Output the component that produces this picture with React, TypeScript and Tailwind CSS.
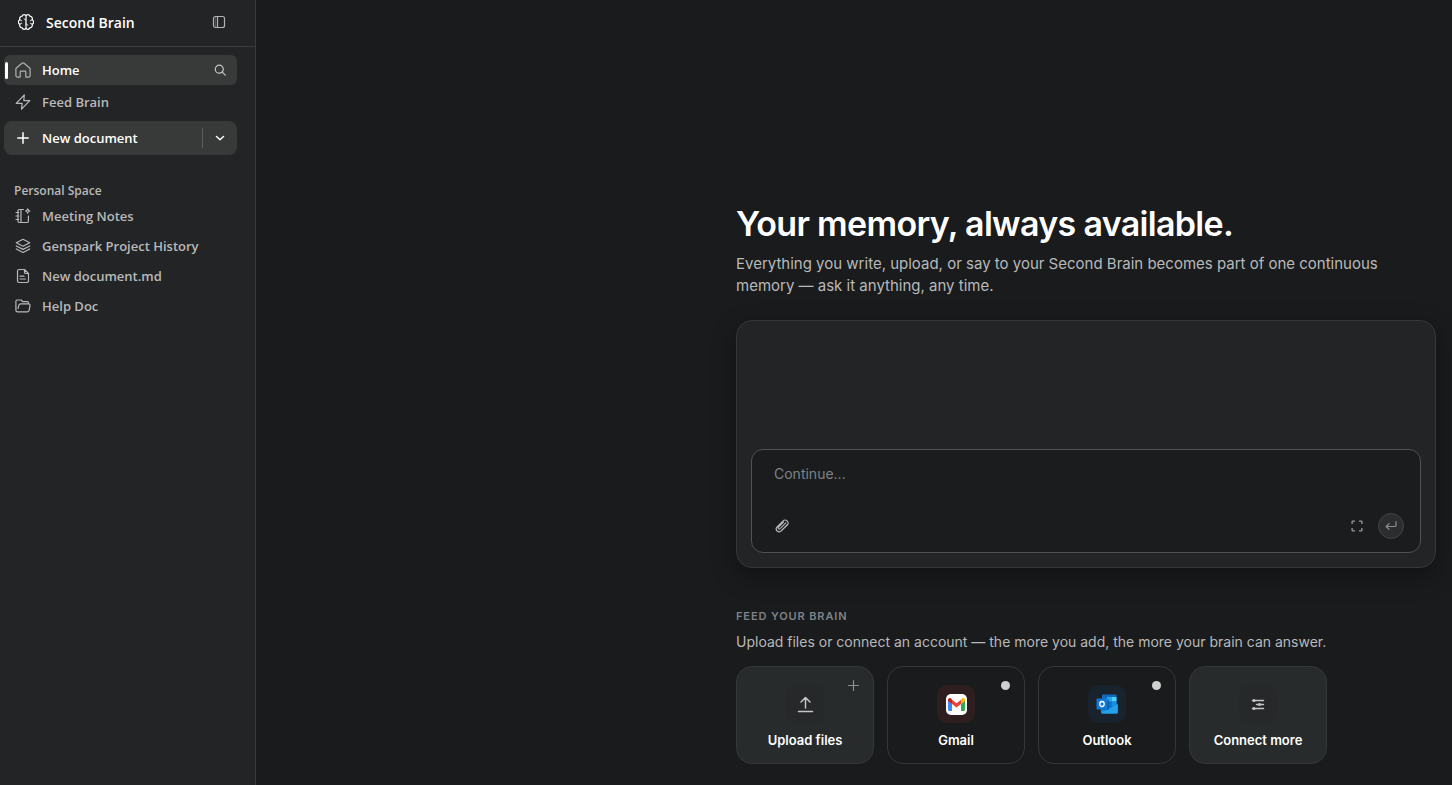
import React from "react";
import type { ReactNode } from "react";

type IconProps = { className?: string; children: ReactNode; box?: string; width?: number };

function Icon({ className = "size-4", children, box = "0 0 16 16", width = 1.2 }: IconProps) {
  return (
    <svg
      className={className}
      viewBox={box}
      fill="none"
      stroke="currentColor"
      strokeWidth={width}
      strokeLinecap="round"
      strokeLinejoin="round"
      aria-hidden="true"
    >
      {children}
    </svg>
  );
}

const BrainIcon = () => (
  <Icon>
    <path d="M8 2v12M8 2.200C7.500.2 4.800.1 4.100 2.200 2.200 2.400 1.200 4.100 1.900 5.700-.1 6.700-.1 9.300 1.900 10.300c-.7 1.600.3 3.300 2.200 3.500.7 2.100 3.400 2 3.900 0M8 2.200c.5-2 3.200-2.100 3.900 0 1.900.2 2.900 1.900 2.200 3.500 2 1 2 3.600 0 4.600.7 1.600-.3 3.300-2.200 3.500-.7 2.100-3.400 2-3.900 0" />
    <path d="M1.900 5.700c.4.700 1 1 1.800 1M1.900 10.300c.4-.7 1-1 1.800-1M14.100 5.700c-.4.700-1 1-1.800 1M14.100 10.300c-.4-.7-1-1-1.800-1M8 6c-.900 0-1.500-.4-1.800-1.100M8 10c.900 0 1.500.4 1.800 1.100" strokeWidth="1" />
  </Icon>
);

const PanelIcon = () => (
  <Icon>
    <rect x="2.500" y="2.500" width="11" height="11" rx="2" />
    <path d="M6.500 2.500v11" />
    <path d="M4.500 3v10" strokeOpacity=".35" />
  </Icon>
);

const HomeIcon = () => (
  <Icon>
    <path d="M.9 7.100c0-.6.3-1.100.7-1.400L7 1.200c.6-.5 1.400-.5 2 0l5.400 4.500c.4.3.7.8.7 1.400v6.400c0 .9-.7 1.600-1.600 1.600h-2.700V10c0-.5-.3-.8-.8-.8H6c-.5 0-.8.3-.8.8v5.100H2.500c-.9 0-1.600-.7-1.600-1.600z" />
  </Icon>
);

const BoltIcon = () => (
  <Icon>
    <path d="M9.300.8 1.200 9.400h6L6.500 15.200l8.300-8.600h-6z" />
  </Icon>
);

const PlusIcon = () => (
  <Icon width={1.500}>
    <path d="M8 2.800v10.400M2.800 8h10.400" />
  </Icon>
);

const SearchIcon = () => (
  <Icon>
    <circle cx="7.300" cy="7.200" r="4" />
    <path d="m10.300 10.200 3 3" />
  </Icon>
);

const ChevronIcon = () => (
  <Icon width={1.500}>
    <path d="m4.500 6.500 3.500 3.200 3.500-3.200" />
  </Icon>
);

const NotesIcon = () => (
  <Icon>
    <path d="M8.500 1.500H4.200c-.7 0-1.200.5-1.200 1.200v10.600c0 .7.5 1.200 1.200 1.200h8c.7 0 1.200-.5 1.200-1.200V8M6 1.500v13M1 4.500h2.800M1 8h2.800M1 11.500h2.800" />
    <path d="M12.700.9c.3 1.300.8 1.800 2.100 2.100-1.300.3-1.800.8-2.100 2.100-.3-1.300-.8-1.800-2.100-2.100 1.300-.3 1.800-.8 2.100-2.100z" />
  </Icon>
);

const LayersIcon = () => (
  <Icon>
    <path d="M8 1.300 14.700 4.700 8 8.200 1.300 4.700zM1.300 8 8 11.400 14.700 8M1.300 11 8 14.500 14.700 11" />
  </Icon>
);

const DocIcon = () => (
  <Icon>
    <path d="M9.500 1.500H4c-.8 0-1.500.6-1.500 1.400v10.200c0 .8.700 1.400 1.500 1.400h8c.8 0 1.500-.6 1.500-1.400V5.500zM9.500 1.500v2.800c0 .7.500 1.200 1.200 1.200h2.800M5 8.200h4M5 11h5.500" />
  </Icon>
);

const FolderIcon = () => (
  <Icon>
    <path d="M13.600 5.800V5c0-.8-.6-1.400-1.400-1.400H7.600L6.200 2H2.300C1.500 2 .9 2.600.9 3.400v8.800c0 1 .7 1.700 1.700 1.700h9.800c.8 0 1.400-.5 1.600-1.200l1-4.900c.2-1-.5-2-1.600-2H5.600c-.8 0-1.500.5-1.700 1.300L3 10.500" />
  </Icon>
);

const ClipIcon = () => (
  <Icon width={1.100}>
    <path d="m9.500 4-5 5c-.5.500-.5 1.200-.1 1.600.500.500 1.200.500 1.700 0l5.700-5.700M14 6.300l-6.400 6.400c-1.300 1.300-3.300 1.400-4.500.3-1.200-1.200-1.100-3.100.2-4.400l5.300-5.300c1.300-1.300 3.100-1.600 4.400-.6.200.1.300.3.400.4 1 1.200.9 2.500.1 3.400L7.500 12.300" />
  </Icon>
);

const ExpandIcon = () => (
  <svg className="size-4" viewBox="0 0 16 16" fill="none" stroke="currentColor" strokeWidth="1.300" aria-hidden="true">
    <path d="M3.100 6V3.700c0-.4.2-.6.6-.6H6M10 3.100h2.300c.4 0 .6.2.6.6V6M12.900 10v2.300c0 .4-.2.6-.6.6H10M6 12.900H3.700c-.4 0-.6-.2-.6-.6V10" />
  </svg>
);

const ReturnIcon = () => (
  <Icon className="size-3.5" box="0 0 14 14">
    <path d="M12 2.500v3.700c0 .8-.5 1.300-1.300 1.300H2.500M5 4.700 2.200 7.500 5 10.300" />
  </Icon>
);

const UploadIcon = () => (
  <Icon className="size-5" box="0 0 20 20" width={1.500}>
    <path d="M10.500 14V3.700M6 8l4.500-4.500L15 8M3.500 17.500h14" />
  </Icon>
);

const SlidersIcon = () => (
  <Icon width={1.400}>
    <path d="M2.500 4.500h11M6.500 8.500h7M2.500 12.500h11" />
    <circle cx="4" cy="4.500" r=".8" fill="currentColor" />
    <circle cx="9.500" cy="8.500" r=".8" fill="currentColor" />
    <circle cx="4" cy="12.500" r=".8" fill="currentColor" />
  </Icon>
);

const GmailLogo = () => (
  <svg className="size-[21px]" viewBox="0 0 21 21" aria-hidden="true">
    <rect width="21" height="21" rx="5" fill="#fff" />
    <path d="M2 6.500v9.300c0 .7.500 1.200 1.200 1.200H6V9.500z" fill="#4285f4" />
    <path d="M19 6.500v9.300c0 .7-.5 1.200-1.200 1.200H15V9.500z" fill="#34a853" />
    <path d="M15 5.700v4.400l4-3V6c0-1.800-1.900-2.600-3.200-1.500z" fill="#fbbc04" />
    <path d="M6 10.100V5.700l4.500 3.500L15 5.700v4.400l-4.500 3.400z" fill="#ea4335" />
    <path d="M2 6v1.100l4 3V5.700L5.200 4.500C3.900 3.400 2 4.200 2 6z" fill="#c5221f" />
  </svg>
);

const OutlookLogo = () => (
  <svg className="size-[22px]" viewBox="0 0 22 22" aria-hidden="true">
    <path d="M6 2.500c0-.6.400-1 1-1h12.500c.6 0 1 .4 1 1V18H6z" fill="#0f6cbd" />
    <path d="M11 4h4.800v4.500H11z" fill="#28a8ea" />
    <path d="M15.800 4h4.700v4.500h-4.700z" fill="#50d0fa" />
    <path d="M11 8.500h4.800v5H11z" fill="#0078d4" />
    <path d="M15.800 8.500h4.700v5h-4.700z" fill="#1490df" />
    <path d="m12.500 16 9.200-5v8.200c0 .8-.6 1.300-1.300 1.300H6.200c-.7 0-1.300-.6-1.300-1.300V14z" fill="#1490df" />
    <path d="m21.700 11-8.200 4.600L5.300 20.100c.2.300.6.400.9.400h14.200c.7 0 1.300-.5 1.300-1.300z" fill="#22a2ea" />
    <path d="M5 6.500h7c.6 0 1 .4 1 1v8.500c0 .6-.4 1-1 1H5z" fill="#0a4f8f" opacity=".6" />
    <rect x=".5" y="5.500" width="11" height="11" rx="1" fill="#1078d6" />
    <ellipse cx="6" cy="11" rx="2.200" ry="2.500" fill="none" stroke="#fff" strokeWidth="1.300" />
  </svg>
);

const spaceItems = [
  { label: "Meeting Notes", icon: <NotesIcon /> },
  { label: "Genspark Project History", icon: <LayersIcon /> },
  { label: "New document.md", icon: <DocIcon /> },
  { label: "Help Doc", icon: <FolderIcon /> },
];

function Label({ children }: { children: ReactNode }) {
  return <span className="leading-5">{children}</span>;
}

function Sidebar() {
  return (
    <aside className="flex w-64 shrink-0 flex-col border-r border-[#3a3b3c] bg-[#232425] font-['Open_Sans','Noto_Sans',sans-serif] text-[13px] font-semibold text-[#b8b9ba]">
      <header className="flex h-[47px] items-center border-b border-[#3a3b3c] pr-7 pb-0.5 pl-[18px] text-sm text-white">
        <BrainIcon />
        <div className="ml-3 flex flex-1 pt-0.5">
          <Label>Second Brain</Label>
        </div>
        <button type="button" aria-label="Toggle sidebar" className="text-[#b0b1b2]">
          <PanelIcon />
        </button>
      </header>

      <nav aria-label="Main" className="mt-2 flex flex-col gap-0.5 pr-[18px] pl-1">
        <div className="relative flex h-[30px] items-center rounded-md bg-[#383939]">
          <span className="absolute left-px h-[17px] w-[3px] rounded-sm bg-white" />
          <a href="#home" className="flex flex-1 items-center gap-[11px] pl-[11px] text-white">
            <span className="text-[#b0b1b2]">
              <HomeIcon />
            </span>
            <Label>Home</Label>
          </a>
          <button type="button" aria-label="Search" className="mr-[9px] text-[#c4c5c6]">
            <SearchIcon />
          </button>
        </div>
        <a href="#feed" className="flex h-[30px] items-center gap-[11px] pl-[11px]">
          <BoltIcon />
          <Label>Feed Brain</Label>
        </a>
      </nav>

      <div className="mt-1 mr-[18px] ml-1 flex h-[34px] items-center rounded-lg bg-[#383939] text-white">
        <button type="button" className="flex h-full flex-1 items-center gap-[11px] pl-[11px]">
          <PlusIcon />
          <Label>New document</Label>
        </button>
        <span className="h-5 w-px bg-[#5c5d5e]" />
        <button
          type="button"
          aria-label="More document types"
          className="flex h-full w-[34px] items-center justify-center"
        >
          <ChevronIcon />
        </button>
      </div>

      <section className="mt-[26px]">
        <h2 className="pl-[14px] text-xs leading-5 font-semibold">Personal Space</h2>
        <ul>
          {spaceItems.map((item) => (
            <li key={item.label}>
              <a href="#space" className="flex h-[30px] items-center gap-[11px] pl-[15px]">
                {item.icon}
                <Label>{item.label}</Label>
              </a>
            </li>
          ))}
        </ul>
      </section>
    </aside>
  );
}

function Composer() {
  return (
    <section className="mt-[23px] rounded-2xl border border-[#363738] bg-[#232425] p-[14px] pt-32 shadow-[0_8px_24px_rgba(0,0,0,0.35)]">
      <form className="flex flex-col rounded-xl border border-[#505152] bg-[#1b1c1d] pt-3 pr-4 pb-[13px] pl-[22px]">
        <textarea
          aria-label="Message"
          placeholder="Continue..."
          rows={1}
          className="h-[51px] resize-none bg-transparent text-sm leading-6 text-white outline-none placeholder:text-[#7d8287]"
        />
        <div className="flex items-center">
          <button type="button" aria-label="Attach file" className="text-[#b8b9ba]">
            <ClipIcon />
          </button>
          <button type="button" aria-label="Expand" className="mr-[13px] ml-auto text-[#96989a]">
            <ExpandIcon />
          </button>
          <button
            type="submit"
            aria-label="Send"
            className="flex size-[26px] items-center justify-center rounded-full border border-[#434445] bg-[#2c2d2e] text-[#8c8e90]"
          >
            <ReturnIcon />
          </button>
        </div>
      </form>
    </section>
  );
}

type SourceProps = {
  label: string;
  logo: ReactNode;
  card: string;
  tile: string;
  corner?: ReactNode;
};

function SourceCard({ label, logo, card, tile, corner }: SourceProps) {
  return (
    <button
      type="button"
      className={`relative flex h-[98px] w-[138px] flex-col items-center rounded-2xl border border-[#363738] pt-[18px] text-[13px] font-semibold text-white ${card}`}
    >
      <span className={`flex size-[38px] items-center justify-center rounded-[10px] ${tile}`}>{logo}</span>
      <span className="mt-[7px] leading-5">{label}</span>
      {corner}
    </button>
  );
}

const dot = <span className="absolute top-[14px] right-[14px] size-[9px] rounded-full bg-[#d0d0d0]" />;

function FeedSection() {
  return (
    <section className="mt-10">
      <h2 className="text-[11px] leading-4 font-semibold tracking-[0.08em] text-[#7d8287]">FEED YOUR BRAIN</h2>
      <p className="mt-2 text-sm leading-5 text-[#b8b9ba]">
        Upload files or connect an account — the more you add, the more your brain can answer.
      </p>
      <div className="mt-[14px] flex flex-wrap gap-[13px]">
        <SourceCard
          label="Upload files"
          logo={<UploadIcon />}
          card="bg-[#282b2b]"
          tile="bg-[#272829] text-[#c4c5c6]"
          corner={
            <span className="absolute top-[10px] right-3 text-[#8c8e90]">
              <Icon>
                <path d="M8.500 3.500v10M3.500 8.500h10" />
              </Icon>
            </span>
          }
        />
        <SourceCard label="Gmail" logo={<GmailLogo />} card="bg-[#1a1b1c]" tile="bg-[#2f1e1f]" corner={dot} />
        <SourceCard label="Outlook" logo={<OutlookLogo />} card="bg-[#1a1b1c]" tile="bg-[#18232e]" corner={dot} />
        <SourceCard
          label="Connect more"
          logo={<SlidersIcon />}
          card="bg-[#282b2b]"
          tile="bg-[#272829] text-[#c4c5c6]"
        />
      </div>
    </section>
  );
}

export default function App() {
  return (
    <div className="flex min-h-screen bg-[#1a1b1c]">
      <Sidebar />
      <main className="flex min-w-0 flex-1 justify-end px-4 pt-[202px] pb-5 font-[Inter,sans-serif]">
        <div className="w-full max-w-[700px]">
          <h1 className="text-[34px] leading-[44px] font-semibold tracking-[-0.02em] text-white">
            Your memory, always available.
          </h1>
          <p className="mt-[7px] text-[15px] leading-[22px] text-[#b8b9ba]">
            Everything you write, upload, or say to your Second Brain becomes part of one continuous memory — ask it
            anything, any time.
          </p>
          <Composer />
          <FeedSection />
        </div>
      </main>
    </div>
  );
}
